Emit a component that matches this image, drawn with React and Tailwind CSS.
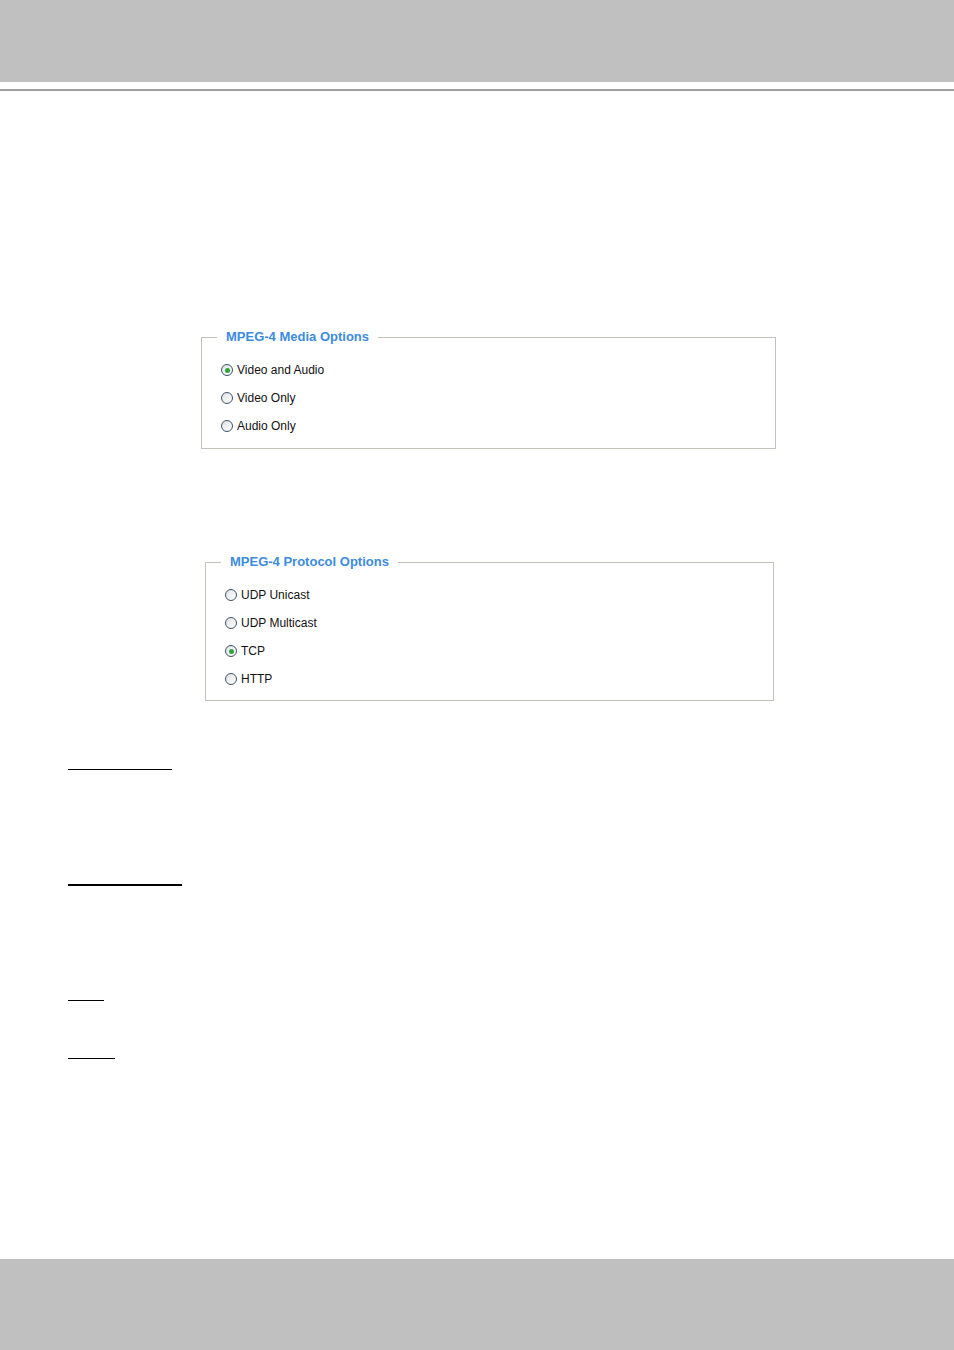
import React from "react";

function Radio({ checked }) {
  return (
    <span className="relative inline-flex h-[12px] w-[12px] shrink-0 items-center justify-center rounded-full border border-[#3e5364] bg-gradient-to-br from-[#dfe3e8] to-white">
      {checked && <span className="h-[5px] w-[5px] rounded-full bg-[#2fa53a]" />}
    </span>
  );
}

function Row({ label, checked }) {
  return (
    <div className="flex h-[28px] items-center gap-[4px] text-[12px] text-[#111]">
      <Radio checked={checked} />
      <span>{label}</span>
    </div>
  );
}

function Group({ legend, items, className, pt, pb }) {
  return (
    <fieldset className={"border border-[#c4c3bb] " + className}>
      <legend className="ml-[15px] px-[9px] text-[13px] font-bold leading-[16px] text-[#3d8be0]">
        {legend}
      </legend>
      <div className={"pl-[19px] " + pt + " " + pb}>
        {items.map((it) => (
          <Row key={it.label} label={it.label} checked={it.checked} />
        ))}
      </div>
    </fieldset>
  );
}

export default function App() {
  return (
    <div
      className="flex min-h-[1350px] w-[954px] flex-col bg-white"
      style={{ fontFamily: '"Liberation Sans", Arial, sans-serif' }}
    >
      <div className="h-[82px] bg-[#bfc0bf]" />
      <div className="mt-[7px] h-[2px] bg-[#a0a0a0]" />

      <Group
        legend="MPEG-4 Media Options"
        className="ml-[201px] mt-[238px] w-[575px]"
        pt="pt-[11px]"
        pb="pb-[8px]"
        items={[
          { label: "Video and Audio", checked: true },
          { label: "Video Only" },
          { label: "Audio Only" },
        ]}
      />

      <Group
        legend="MPEG-4 Protocol Options"
        className="ml-[205px] mt-[105px] w-[569px]"
        pt="pt-[11px]"
        pb="pb-[7px]"
        items={[
          { label: "UDP Unicast" },
          { label: "UDP Multicast" },
          { label: "TCP", checked: true },
          { label: "HTTP" },
        ]}
      />

      <div className="ml-[68px] mt-[68px] h-[1px] w-[104px] bg-black" />
      <div className="ml-[68px] mt-[114px] h-[2px] w-[114px] bg-black" />
      <div className="ml-[68px] mt-[114px] h-[1px] w-[36px] bg-black" />
      <div className="ml-[68px] mt-[57px] h-[1px] w-[47px] bg-black" />

      <div className="mt-auto h-[91px] bg-[#bfc0bf]" />
    </div>
  );
}
